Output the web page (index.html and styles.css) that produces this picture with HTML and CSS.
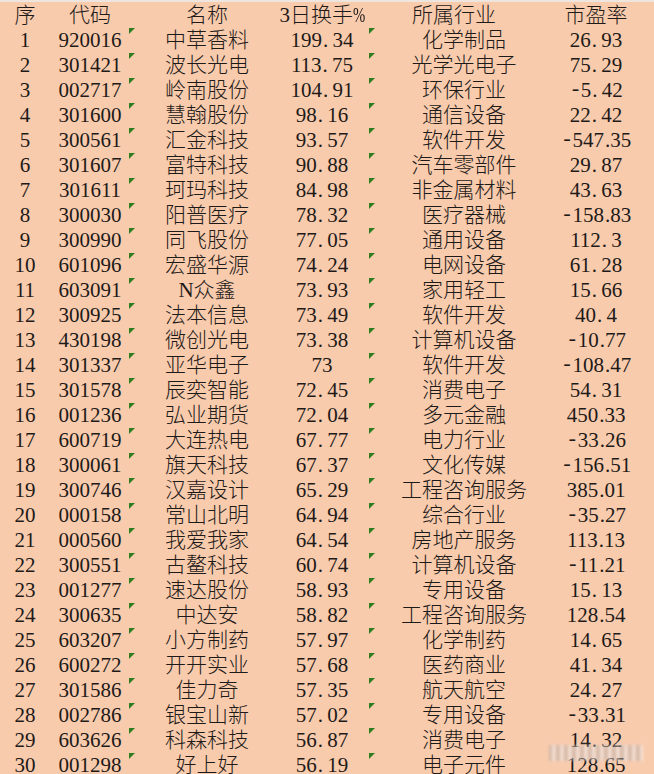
FILE: index.html
```html
<!DOCTYPE html>
<html lang="zh-CN">
<head>
<meta charset="utf-8">
<title>3日换手率排行</title>
<link rel="stylesheet" href="styles.css">
</head>
<body>
<div class="sheet">
  <div class="row head"><span class="c0">序</span><span class="c1">代码</span><span class="c2">名称</span><span class="c3">3日换手<span class="pc">%</span></span><span class="c4 h4">所属行业</span><span class="c5">市盈率</span></div>
  <div class="row"><span class="c0">1</span><span class="c1">920016</span><span class="c2">中草香料</span><span class="c3">199<span class="pt">.</span>34</span><span class="c4">化学制品</span><span class="c5">26<span class="pt">.</span>93</span></div>
  <div class="row"><span class="c0">2</span><span class="c1">301421</span><span class="c2">波长光电</span><span class="c3">113<span class="pt">.</span>75</span><span class="c4">光学光电子</span><span class="c5">75<span class="pt">.</span>29</span></div>
  <div class="row"><span class="c0">3</span><span class="c1">002717</span><span class="c2">岭南股份</span><span class="c3">104<span class="pt">.</span>91</span><span class="c4">环保行业</span><span class="c5"><span class="mn">-</span>5<span class="pt">.</span>42</span></div>
  <div class="row"><span class="c0">4</span><span class="c1">301600</span><span class="c2">慧翰股份</span><span class="c3">98<span class="pt">.</span>16</span><span class="c4">通信设备</span><span class="c5">22<span class="pt">.</span>42</span></div>
  <div class="row"><span class="c0">5</span><span class="c1">300561</span><span class="c2">汇金科技</span><span class="c3">93<span class="pt">.</span>57</span><span class="c4">软件开发</span><span class="c5"><span class="mn">-</span>547<span class="pt">.</span>35</span></div>
  <div class="row"><span class="c0">6</span><span class="c1">301607</span><span class="c2">富特科技</span><span class="c3">90<span class="pt">.</span>88</span><span class="c4">汽车零部件</span><span class="c5">29<span class="pt">.</span>87</span></div>
  <div class="row"><span class="c0">7</span><span class="c1">301611</span><span class="c2">珂玛科技</span><span class="c3">84<span class="pt">.</span>98</span><span class="c4">非金属材料</span><span class="c5">43<span class="pt">.</span>63</span></div>
  <div class="row"><span class="c0">8</span><span class="c1">300030</span><span class="c2">阳普医疗</span><span class="c3">78<span class="pt">.</span>32</span><span class="c4">医疗器械</span><span class="c5"><span class="mn">-</span>158<span class="pt">.</span>83</span></div>
  <div class="row"><span class="c0">9</span><span class="c1">300990</span><span class="c2">同飞股份</span><span class="c3">77<span class="pt">.</span>05</span><span class="c4">通用设备</span><span class="c5">112<span class="pt">.</span>3</span></div>
  <div class="row"><span class="c0">10</span><span class="c1">601096</span><span class="c2">宏盛华源</span><span class="c3">74<span class="pt">.</span>24</span><span class="c4">电网设备</span><span class="c5">61<span class="pt">.</span>28</span></div>
  <div class="row"><span class="c0">11</span><span class="c1">603091</span><span class="c2">N众鑫</span><span class="c3">73<span class="pt">.</span>93</span><span class="c4">家用轻工</span><span class="c5">15<span class="pt">.</span>66</span></div>
  <div class="row"><span class="c0">12</span><span class="c1">300925</span><span class="c2">法本信息</span><span class="c3">73<span class="pt">.</span>49</span><span class="c4">软件开发</span><span class="c5">40<span class="pt">.</span>4</span></div>
  <div class="row"><span class="c0">13</span><span class="c1">430198</span><span class="c2">微创光电</span><span class="c3">73<span class="pt">.</span>38</span><span class="c4">计算机设备</span><span class="c5"><span class="mn">-</span>10<span class="pt">.</span>77</span></div>
  <div class="row"><span class="c0">14</span><span class="c1">301337</span><span class="c2">亚华电子</span><span class="c3">73</span><span class="c4">软件开发</span><span class="c5"><span class="mn">-</span>108<span class="pt">.</span>47</span></div>
  <div class="row"><span class="c0">15</span><span class="c1">301578</span><span class="c2">辰奕智能</span><span class="c3">72<span class="pt">.</span>45</span><span class="c4">消费电子</span><span class="c5">54<span class="pt">.</span>31</span></div>
  <div class="row"><span class="c0">16</span><span class="c1">001236</span><span class="c2">弘业期货</span><span class="c3">72<span class="pt">.</span>04</span><span class="c4">多元金融</span><span class="c5">450<span class="pt">.</span>33</span></div>
  <div class="row"><span class="c0">17</span><span class="c1">600719</span><span class="c2">大连热电</span><span class="c3">67<span class="pt">.</span>77</span><span class="c4">电力行业</span><span class="c5"><span class="mn">-</span>33<span class="pt">.</span>26</span></div>
  <div class="row"><span class="c0">18</span><span class="c1">300061</span><span class="c2">旗天科技</span><span class="c3">67<span class="pt">.</span>37</span><span class="c4">文化传媒</span><span class="c5"><span class="mn">-</span>156<span class="pt">.</span>51</span></div>
  <div class="row"><span class="c0">19</span><span class="c1">300746</span><span class="c2">汉嘉设计</span><span class="c3">65<span class="pt">.</span>29</span><span class="c4">工程咨询服务</span><span class="c5">385<span class="pt">.</span>01</span></div>
  <div class="row"><span class="c0">20</span><span class="c1">000158</span><span class="c2">常山北明</span><span class="c3">64<span class="pt">.</span>94</span><span class="c4">综合行业</span><span class="c5"><span class="mn">-</span>35<span class="pt">.</span>27</span></div>
  <div class="row"><span class="c0">21</span><span class="c1">000560</span><span class="c2">我爱我家</span><span class="c3">64<span class="pt">.</span>54</span><span class="c4">房地产服务</span><span class="c5">113<span class="pt">.</span>13</span></div>
  <div class="row"><span class="c0">22</span><span class="c1">300551</span><span class="c2">古鳌科技</span><span class="c3">60<span class="pt">.</span>74</span><span class="c4">计算机设备</span><span class="c5"><span class="mn">-</span>11<span class="pt">.</span>21</span></div>
  <div class="row"><span class="c0">23</span><span class="c1">001277</span><span class="c2">速达股份</span><span class="c3">58<span class="pt">.</span>93</span><span class="c4">专用设备</span><span class="c5">15<span class="pt">.</span>13</span></div>
  <div class="row"><span class="c0">24</span><span class="c1">300635</span><span class="c2">中达安</span><span class="c3">58<span class="pt">.</span>82</span><span class="c4">工程咨询服务</span><span class="c5">128<span class="pt">.</span>54</span></div>
  <div class="row"><span class="c0">25</span><span class="c1">603207</span><span class="c2">小方制药</span><span class="c3">57<span class="pt">.</span>97</span><span class="c4">化学制药</span><span class="c5">14<span class="pt">.</span>65</span></div>
  <div class="row"><span class="c0">26</span><span class="c1">600272</span><span class="c2">开开实业</span><span class="c3">57<span class="pt">.</span>68</span><span class="c4">医药商业</span><span class="c5">41<span class="pt">.</span>34</span></div>
  <div class="row"><span class="c0">27</span><span class="c1">301586</span><span class="c2">佳力奇</span><span class="c3">57<span class="pt">.</span>35</span><span class="c4">航天航空</span><span class="c5">24<span class="pt">.</span>27</span></div>
  <div class="row"><span class="c0">28</span><span class="c1">002786</span><span class="c2">银宝山新</span><span class="c3">57<span class="pt">.</span>02</span><span class="c4">专用设备</span><span class="c5"><span class="mn">-</span>33<span class="pt">.</span>31</span></div>
  <div class="row"><span class="c0">29</span><span class="c1">603626</span><span class="c2">科森科技</span><span class="c3">56<span class="pt">.</span>87</span><span class="c4">消费电子</span><span class="c5">14<span class="pt">.</span>32</span></div>
  <div class="row"><span class="c0">30</span><span class="c1">001298</span><span class="c2">好上好</span><span class="c3">56<span class="pt">.</span>19</span><span class="c4">电子元件</span><span class="c5">128<span class="pt">.</span>65</span></div>
  <div class="watermark"></div>
</div>
</body>
</html>
```

FILE: styles.css
```css
html, body {
  margin: 0;
  padding: 0;
  background: #f8cbad;
}
body {
  width: 654px;
  height: 774px;
  overflow: hidden;
}
.sheet {
  position: relative;
  border-top: 2px solid #efe5df;
  font-family: "Liberation Serif", "Noto Sans CJK SC", serif;
  font-size: 21px;
  font-weight: 300;
  color: #1e1a18;
}
.row {
  position: relative;
  display: grid;
  grid-template-columns: 50px 80px 154px 76px 208px 56px;
  height: 25px;
  box-sizing: border-box;
  padding-top: 2px;
  line-height: 23px;
  white-space: nowrap;
}
.row > span {
  display: flex;
  justify-content: center;
}
.row:not(.head)::before,
.row:not(.head)::after {
  content: "";
  position: absolute;
  top: 1px;
  width: 0;
  height: 0;
  border-top: 6px solid #2f7d1f;
  border-right: 6px solid transparent;
}
.row:not(.head)::before { left: 129px; }
.row:not(.head)::after { left: 369px; }
.h4 { padding-right: 20px; }
.pc {
  display: inline-block;
  width: 0.55em;
  transform: scaleX(0.7);
  transform-origin: left center;
}
.pt {
  display: inline-block;
  width: 0.5em;
  text-align: left;
  padding-left: 1px;
  box-sizing: border-box;
}
.mn {
  font-family: "Liberation Mono", monospace;
  letter-spacing: -1px;
}
.watermark {
  position: absolute;
  left: 549px;
  top: 743px;
  width: 94px;
  height: 16px;
  background:
    repeating-linear-gradient(90deg, rgba(170,160,158,0.55) 0 3px, rgba(245,240,238,0.7) 3px 6px, rgba(200,192,190,0.5) 6px 8px);
  filter: blur(1.5px);
  opacity: 0.85;
}
```
